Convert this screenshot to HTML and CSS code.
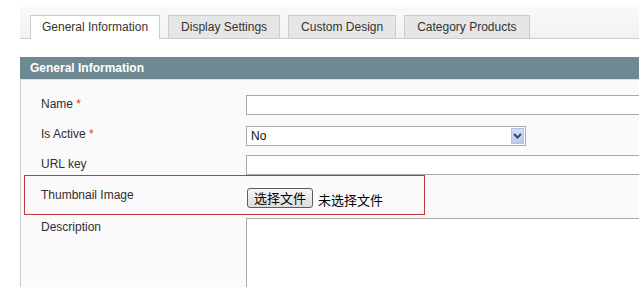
FILE: index.html
```html
<!DOCTYPE html>
<html>
<head>
<meta charset="utf-8">
<link rel="stylesheet" href="styles.css">
</head>
<body>
<div class="wrap">
  <div class="tabs">
    <div class="tab active">General Information</div>
    <div class="tab">Display Settings</div>
    <div class="tab">Custom Design</div>
    <div class="tab">Category Products</div>
  </div>
  <div class="section-head">General Information</div>
  <div class="panel">
    <div class="row r-name">
      <label class="lbl">Name <span class="req">*</span></label>
      <div class="input wide"></div>
    </div>
    <div class="row r-active">
      <label class="lbl">Is Active <span class="req">*</span></label>
      <div class="select">
        <span class="sel-val">No</span>
        <span class="sel-arrow"><svg width="9" height="6" viewBox="0 0 9 6"><path d="M1 1 L4.5 4.5 L8 1" fill="none" stroke="#2d4a86" stroke-width="2"/></svg></span>
      </div>
    </div>
    <div class="row r-url">
      <label class="lbl">URL key</label>
      <div class="input wide"></div>
    </div>
    <div class="row r-thumb">
      <label class="lbl">Thumbnail Image</label>
      <div class="file">
        <span class="file-btn">选择文件</span>
        <span class="file-none">未选择文件</span>
      </div>
    </div>
    <div class="row r-desc">
      <label class="lbl">Description</label>
      <div class="textarea"></div>
    </div>
  </div>
</div>
</body>
</html>
```
FILE: styles.css
```css
html, body {
  margin: 0;
  padding: 0;
  background: #ffffff;
  overflow: hidden;
  height: 287px;
}
body {
  font-family: "Liberation Sans", Arial, sans-serif;
  font-size: 12px;
  color: #2f2f2f;
}
.wrap {
  margin-left: 20px;
  padding-top: 7px;
}
.tabs {
  height: 23px;
  padding: 8px 0 0 10px;
  background: linear-gradient(#f9f9f9, #f2f2f2);
  border-bottom: 1px solid #cccccc;
  display: flex;
  gap: 8px;
  align-items: flex-end;
}
.tab {
  height: 22px;
  line-height: 22px;
  padding: 0 12px;
  border: 1px solid #cccccc;
  border-bottom: none;
  background: #e6e6e6;
  color: #333333;
  white-space: nowrap;
}
.tab.active {
  background: #ffffff;
  height: 23px;
  margin-bottom: -1px;
  line-height: 22px;
  padding: 0 11px;
}
.section-head {
  margin-top: 18px;
  height: 22px;
  line-height: 23px;
  padding-left: 10px;
  background: #6f8992;
  color: #ffffff;
  font-weight: bold;
  border-bottom: 1px solid #d4e3e7;
}
.panel {
  border-left: 1px solid #cbcbcb;
  background: #fafafa;
  padding: 15px 0 0 20px;
  height: 200px;
}
.row {
  display: flex;
  align-items: flex-start;
}
.lbl {
  width: 205px;
  flex: none;
  line-height: 15px;
}
.req {
  color: #eb340a;
}
.input {
  height: 18px;
  border: 1px solid #aaaaaa;
  background: #ffffff;
}
.wide {
  width: 420px;
  flex: none;
}
.r-name { margin-bottom: 11px; }
.r-name .lbl { margin-top: 2px; }
.r-active { margin-bottom: 9px; }
.r-active .lbl { margin-top: 1px; }
.r-url .lbl { margin-top: 2px; }
.select {
  width: 278px;
  height: 18px;
  border: 1px solid #aaaaaa;
  background: #ffffff;
  display: flex;
  align-items: center;
  justify-content: space-between;
  font-size: 12px;
  color: #111111;
}
.sel-val {
  padding-left: 4px;
}
.sel-arrow {
  width: 13px;
  height: 16px;
  margin-right: 1px;
  background: linear-gradient(#d3ddf3, #bccbeb);
  border: 1px solid #b3c3e3;
  box-sizing: border-box;
  display: flex;
  align-items: center;
  justify-content: center;
}
.r-thumb {
  margin-left: -17px;
  width: 383px;
  height: 38px;
  border: 1px solid #c0393b;
  padding-left: 16px;
  align-items: flex-start;
}
.r-thumb .lbl {
  margin-top: 12px;
}
.file {
  margin-top: 11px;
  margin-left: 1px;
  display: flex;
  align-items: center;
  font-family: "Noto Sans CJK SC", sans-serif;
  font-size: 13px;
  color: #000000;
  white-space: nowrap;
}
.file-btn {
  height: 18px;
  line-height: 17px;
  padding: 0 6px;
  border: 1px solid #5c5c5c;
  border-radius: 3px;
  background: linear-gradient(#f6f6f6, #dcdcdc);
}
.file-none {
  margin-left: 5px;
  margin-top: 3px;
}
.r-desc {
  margin-top: 3px;
}
.r-desc .lbl {
  margin-top: 2px;
}
.textarea {
  width: 420px;
  height: 120px;
  flex: none;
  border: 1px solid #aaaaaa;
  background: #ffffff;
}
```
